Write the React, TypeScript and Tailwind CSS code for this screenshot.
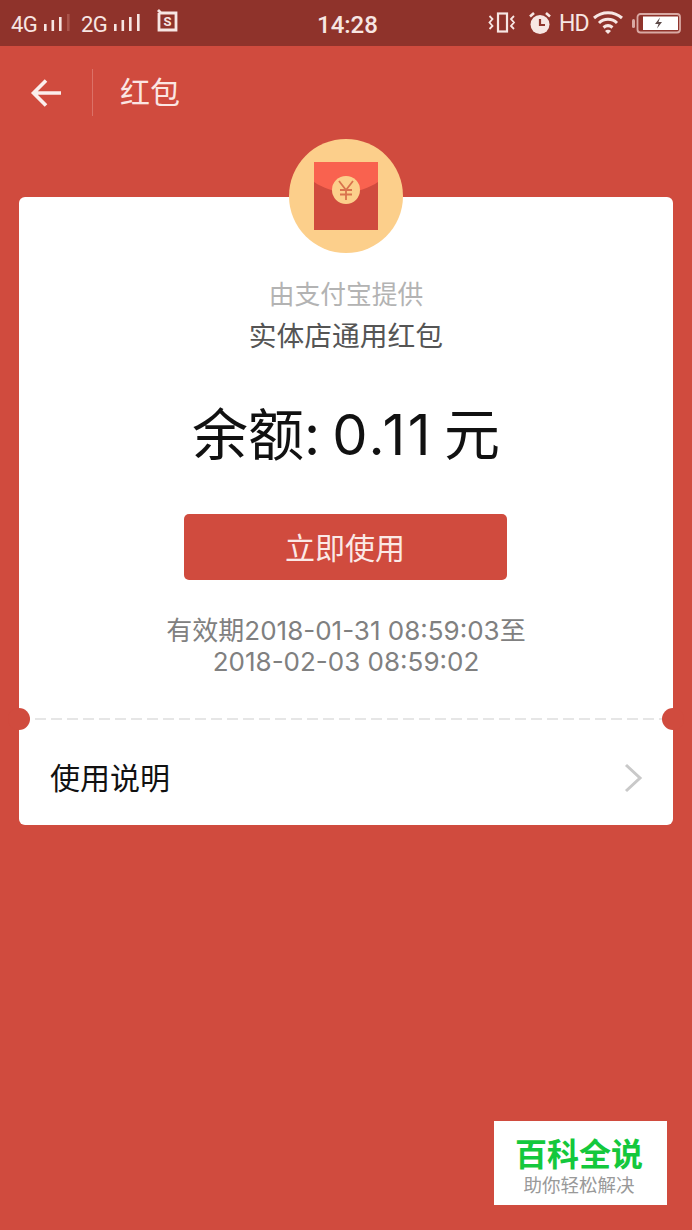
const font = "font-['Roboto','Noto_Sans_CJK_SC',sans-serif]";
const priceFont = "font-['Inter','Noto_Sans_CJK_SC',sans-serif]";

function Signal({ dim }: { dim?: boolean }) {
  return (
    <svg width="28" height="18" viewBox="0 0 28 18" className="block">
      <rect x="1" y="10" width="2.6" height="7" fill="#f7e6e3" />
      <rect x="8.500" y="6" width="2.6" height="11" fill="#f7e6e3" />
      <rect x="16" y="3" width="2.6" height="14" fill="#f7e6e3" />
      <rect x="24" y="0" width="2.6" height="17" fill={dim ? "#a9544b" : "#f7e6e3"} />
    </svg>
  );
}

function StatusBar() {
  return (
    <div className="relative flex h-[46px] items-center justify-between bg-[#8f332b] pl-[11px] pr-[11px] text-[#f7e6e3]">
      <div className="flex items-center">
        <span className="mt-[3px] w-[32px] text-[22px] tracking-[-0.5px]">4G</span>
        <Signal dim />
        <span className="ml-[10px] mt-[3px] w-[32px] text-[22px] tracking-[-0.5px]">2G</span>
        <Signal />
        <svg width="22" height="24" viewBox="0 0 22 24" className="ml-[15px] mb-[4px]">
          <path d="M2 1l3 3h15v17H3V4" fill="none" stroke="#f7e6e3" strokeWidth="2.8" />
          <text x="11.500" y="17" textAnchor="middle" fontSize="13" fontWeight="700" fill="#f7e6e3">S</text>
        </svg>
      </div>
      <span className="absolute left-[317px] top-[10px] text-[24px] leading-[30px] font-medium">14:28</span>
      <div className="flex items-center">
        <svg width="28" height="26" viewBox="0 0 28 26">
          <rect x="10" y="3.500" width="9" height="18" fill="none" stroke="#f7e6e3" strokeWidth="2.200" />
          <path d="M1.500 6l3 3-3 3.500 3 3.500-3 3M26 6l-3 3 3 3.500-3 3.500 3 3" fill="none" stroke="#f7e6e3" strokeWidth="1.800" />
        </svg>
        <svg width="26" height="26" viewBox="0 0 26 26" className="ml-[11px]">
          <circle cx="13" cy="14.500" r="9.500" fill="#f7e6e3" />
          <path d="M13 9v6h5" fill="none" stroke="#8f332b" strokeWidth="2.200" />
          <path d="M3 6.500l4-3.500M23 6.500l-4-3.500" stroke="#f7e6e3" strokeWidth="2.600" />
        </svg>
        <span className="ml-[6px] mt-[2px] w-[28px] text-[23px] tracking-[-1px]">HD</span>
        <svg width="32" height="24" viewBox="0 0 32 24" className="ml-[5px] mb-[2px]">
          <path d="M2 8c8-7 20-7 28 0M7 13c5-5 13-5 18 0M11.500 17.500c3-2.500 6-2.500 9 0" fill="none" stroke="#f7e6e3" strokeWidth="3" />
          <path d="M13 21a4 4 0 0 1 6 0l-3 3z" fill="#f7e6e3" />
        </svg>
        <svg width="49" height="22" viewBox="0 0 49 22" className="ml-[8px]">
          <rect x="0" y="7" width="3" height="9" rx="1.500" fill="#d9a9a3" />
          <rect x="5.500" y="2" width="42.500" height="18.500" rx="3" fill="none" stroke="#d9a9a3" strokeWidth="1.800" />
          <rect x="11" y="4.500" width="35" height="13.500" fill="#ffffff" />
          <path d="M28 5.500l-5 6.500h3.500l-1.500 4.500 5-6.500h-3.500z" fill="#5c4a48" />
        </svg>
      </div>
    </div>
  );
}

function Packet() {
  return (
    <div className="mx-auto -mt-[58px] flex h-[114px] w-[114px] items-center justify-center rounded-full bg-[#fccf8b]">
      <svg width="64" height="68" viewBox="0 0 64 68">
        <rect width="64" height="68" fill="#d04b3e" />
        <path d="M0 0h64v20c-9 6-20 10-32 10S9 26 0 20z" fill="#f9624f" />
        <circle cx="32" cy="28" r="14" fill="#fccf8b" />
        <path d="M25 19l7 9 7-9M32 28v10M26 28h12M26 32.500h12" fill="none" stroke="#d9734e" strokeWidth="1.800" />
      </svg>
    </div>
  );
}

export default function App() {
  return (
    <div className={`relative flex h-[1230px] w-[692px] flex-col overflow-hidden bg-[#d04b3e] ${font}`}>
      <StatusBar />

      <div className="flex h-[94px] items-start pt-[23px]">
        <svg width="34" height="34" viewBox="0 0 34 34" className="ml-[30px] mt-[7px]">
          <path d="M31 17H4M16 4.500L3.500 17 16 29.500" fill="none" stroke="#fbeeec" strokeWidth="3.600" />
        </svg>
        <div className="ml-[28px] h-[47px] w-px bg-[#dc7167]" />
        <span className="ml-[27px] mt-[6px] text-[30px] leading-[36px] text-[#fbe6e3]">红包</span>
      </div>

      <div className="mx-[19px] mt-[57px] h-[628px] rounded-[6px] bg-white">
        <Packet />
        <div className="mt-[24px] text-center text-[25.750px] leading-[36px] text-[#b3b3b3]">由支付宝提供</div>
        <div className="mt-[6px] text-center text-[27.750px] leading-[36px] text-[#555555]">实体店通用红包</div>
        <div className={`mt-[45px] text-center text-[56px] leading-[70px] text-[#111111] ${priceFont}`}>
          余额:<span className="ml-[12px] tracking-[2.500px]">0.11</span>
          <span className="ml-[11px]">元</span>
        </div>
        <button className="mx-auto mt-[44px] block h-[66px] w-[323px] -translate-x-px rounded-[5px] bg-[#d04b3e] pt-[3px] text-[30px] text-[#fbe9e6]">
          立即使用
        </button>
        <div className={`mt-[35px] text-center text-[26px] leading-[31px] text-[#808080] ${priceFont}`}>
          <div>有效期2018-01-31 08:59:03至</div>
          <div>2018-02-03 08:59:02</div>
        </div>

        <div className="relative mt-[41px] h-[2px] bg-[repeating-linear-gradient(90deg,#e6e6e6_0_11px,transparent_11px_16px)]">
          <div className="absolute -left-[11px] -top-[10px] h-[22px] w-[22px] rounded-full bg-[#d04b3e]" />
          <div className="absolute -right-[11px] -top-[10px] h-[22px] w-[22px] rounded-full bg-[#d04b3e]" />
        </div>

        <div className="flex h-[104px] items-center justify-between pl-[31px] pr-[30px] pt-[12px]">
          <span className="text-[30px] text-[#111111]">使用说明</span>
          <svg width="20" height="30" viewBox="0 0 20 30">
            <path d="M3 2l14 13L3 28" fill="none" stroke="#c9c9c9" strokeWidth="3" />
          </svg>
        </div>
      </div>

      <div className="absolute left-[494px] top-[1121px] flex h-[84px] w-[173px] flex-col items-center bg-white pr-[3px] pt-[16px]">
        <span className="text-[32px] leading-[37px] font-bold text-[#14c83c]">百科全说</span>
        <span className="text-[18.500px] leading-[24px] text-[#999999]">助你轻松解决</span>
      </div>
    </div>
  );
}
